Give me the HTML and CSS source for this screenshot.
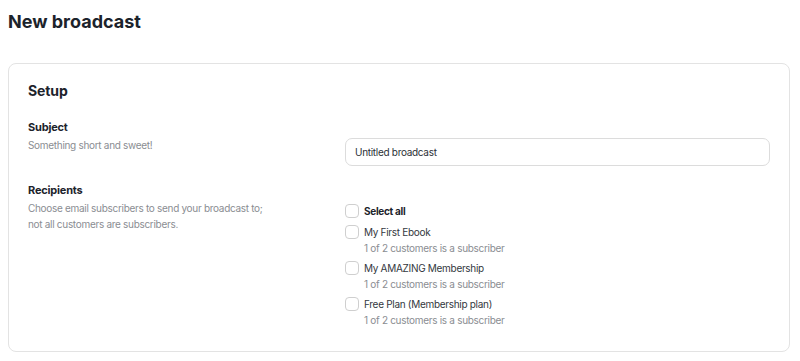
FILE: index.html
```html
<!DOCTYPE html>
<html>
<head>
    <title>New broadcast</title>
    <link rel="stylesheet" href="styles.css">
</head>
<body>
    <h1 class="page-title">New broadcast</h1>
    <div class="card">
        <h2 class="card-title">Setup</h2>
        <div class="field">
            <div class="field-info">
                <div class="field-label">Subject</div>
                <div class="field-help">Something short and sweet!</div>
            </div>
            <div class="field-control subject-control">
                <input class="text-input" type="text" value="Untitled broadcast">
            </div>
        </div>
        <div class="field">
            <div class="field-info">
                <div class="field-label">Recipients</div>
                <div class="field-help">Choose email subscribers to send your broadcast to;<br>not all customers are subscribers.</div>
            </div>
            <div class="field-control recipients-control">
                <label class="check-row select-all">
                    <span class="checkbox"></span>
                    <span class="check-label">Select all</span>
                </label>
                <label class="check-row">
                    <span class="checkbox"></span>
                    <span>
                        <span class="check-label">My First Ebook</span>
                        <span class="check-sub">1 of 2 customers is a subscriber</span>
                    </span>
                </label>
                <label class="check-row">
                    <span class="checkbox"></span>
                    <span>
                        <span class="check-label">My AMAZING Membership</span>
                        <span class="check-sub">1 of 2 customers is a subscriber</span>
                    </span>
                </label>
                <label class="check-row">
                    <span class="checkbox"></span>
                    <span>
                        <span class="check-label">Free Plan (Membership plan)</span>
                        <span class="check-sub">1 of 2 customers is a subscriber</span>
                    </span>
                </label>
            </div>
        </div>
    </div>
</body>
</html>
```

FILE: styles.css
```css
body {
    margin: 0;
    padding: 8px 10px 8px 8px;
    font-family: Inter, "Noto Sans", sans-serif;
    background-color: #ffffff;
    color: #1f2328;
}
.page-title {
    margin: 2px 0 29px 0;
    font-size: 18px;
    line-height: 24px;
    font-weight: 700;
    color: #1c232b;
}
.card {
    border: 1px solid #e3e3e3;
    border-radius: 8px;
    padding: 17px 19px 23px 19px;
}
.card-title {
    margin: 0 0 17px 0;
    font-size: 14px;
    line-height: 20px;
    font-weight: 700;
    letter-spacing: -0.1px;
    color: #1c232b;
}
.field {
    display: grid;
    grid-template-columns: 317px 1fr;
    margin-bottom: 15px;
}
.field:last-child {
    margin-bottom: 0;
}
.field-label {
    font-size: 11px;
    line-height: 18px;
    font-weight: 700;
    letter-spacing: -0.2px;
    color: #1c232b;
}
.field-help {
    font-size: 10px;
    line-height: 16px;
    letter-spacing: -0.3px;
    color: #8a8d92;
    margin-top: 1px;
}
.subject-control {
    padding-top: 20px;
}
.text-input {
    box-sizing: border-box;
    width: 100%;
    height: 28px;
    padding: 0 9px;
    border: 1px solid #dcdcdc;
    border-radius: 7px;
    font-family: inherit;
    font-size: 10px;
    letter-spacing: -0.3px;
    color: #2b3036;
    outline: none;
}
.recipients-control {
    padding-top: 22px;
    display: flex;
    flex-direction: column;
    gap: 4px;
}
.check-row {
    display: flex;
    align-items: flex-start;
    gap: 5px;
}
.select-all {
    margin-bottom: 1px;
}
.checkbox {
    flex: none;
    box-sizing: border-box;
    width: 14px;
    height: 14px;
    margin-top: 1px;
    border: 1px solid #cfcfcf;
    border-radius: 4px;
    background: #ffffff;
}
.check-label {
    display: block;
    font-size: 10px;
    line-height: 16px;
    letter-spacing: -0.3px;
    color: #33383e;
}
.select-all .check-label {
    font-weight: 700;
    color: #1c232b;
}
.check-sub {
    display: block;
    font-size: 10px;
    line-height: 16px;
    letter-spacing: -0.3px;
    color: #8a8d92;
}
```
